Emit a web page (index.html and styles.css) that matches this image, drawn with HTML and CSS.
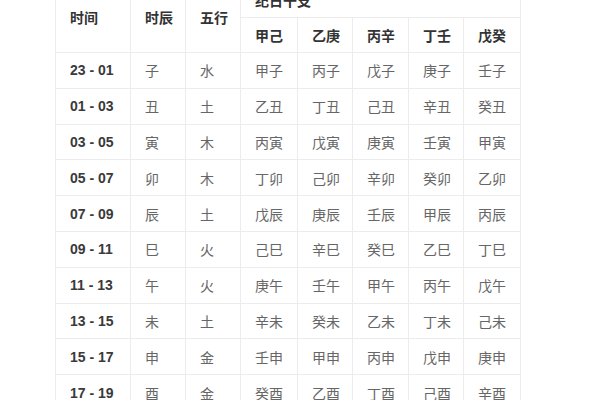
FILE: index.html
```html
<!DOCTYPE html>
<html lang="zh">
<head>
<meta charset="utf-8">
<title>时辰表</title>
<link rel="stylesheet" href="styles.css">
</head>
<body>
<table class="tbl">
  <colgroup>
    <col class="c-time"><col class="c-n"><col class="c-n"><col class="c-w"><col class="c-n"><col class="c-m"><col class="c-n"><col class="c-w">
  </colgroup>
  <thead>
    <tr class="h1">
      <th rowspan="2">时间</th>
      <th rowspan="2">时辰</th>
      <th rowspan="2">五行</th>
      <th colspan="5">纪日干支</th>
    </tr>
    <tr class="h2">
      <th>甲己</th><th>乙庚</th><th>丙辛</th><th>丁壬</th><th>戊癸</th>
    </tr>
  </thead>
  <tbody>
    <tr><td class="t">23 - 01</td><td>子</td><td>水</td><td>甲子</td><td>丙子</td><td>戊子</td><td>庚子</td><td>壬子</td></tr>
    <tr><td class="t">01 - 03</td><td>丑</td><td>土</td><td>乙丑</td><td>丁丑</td><td>己丑</td><td>辛丑</td><td>癸丑</td></tr>
    <tr><td class="t">03 - 05</td><td>寅</td><td>木</td><td>丙寅</td><td>戊寅</td><td>庚寅</td><td>壬寅</td><td>甲寅</td></tr>
    <tr><td class="t">05 - 07</td><td>卯</td><td>木</td><td>丁卯</td><td>己卯</td><td>辛卯</td><td>癸卯</td><td>乙卯</td></tr>
    <tr><td class="t">07 - 09</td><td>辰</td><td>土</td><td>戊辰</td><td>庚辰</td><td>壬辰</td><td>甲辰</td><td>丙辰</td></tr>
    <tr><td class="t">09 - 11</td><td>巳</td><td>火</td><td>己巳</td><td>辛巳</td><td>癸巳</td><td>乙巳</td><td>丁巳</td></tr>
    <tr><td class="t">11 - 13</td><td>午</td><td>火</td><td>庚午</td><td>壬午</td><td>甲午</td><td>丙午</td><td>戊午</td></tr>
    <tr><td class="t">13 - 15</td><td>未</td><td>土</td><td>辛未</td><td>癸未</td><td>乙未</td><td>丁未</td><td>己未</td></tr>
    <tr><td class="t">15 - 17</td><td>申</td><td>金</td><td>壬申</td><td>甲申</td><td>丙申</td><td>戊申</td><td>庚申</td></tr>
    <tr><td class="t">17 - 19</td><td>酉</td><td>金</td><td>癸酉</td><td>乙酉</td><td>丁酉</td><td>己酉</td><td>辛酉</td></tr>
    <tr><td class="t">19 - 21</td><td>戌</td><td>土</td><td>甲戌</td><td>丙戌</td><td>戊戌</td><td>庚戌</td><td>壬戌</td></tr>
  </tbody>
</table>
</body>
</html>
```
FILE: styles.css
```css
html, body {
  margin: 0;
  padding: 0;
  background: #ffffff;
  overflow: hidden;
}

.tbl {
  margin: -19px 0 0 55px;
  border-collapse: collapse;
  table-layout: fixed;
  width: 466px;
  font-family: "Liberation Sans", "Noto Sans CJK SC", sans-serif;
  font-size: 14px;
}

.c-time { width: 75px; }
.c-n { width: 55px; }
.c-w { width: 57px; }
.c-m { width: 56px; }

.tbl th,
.tbl td {
  border: 1px solid #ececec;
  padding: 0 0 0 14px;
  text-align: left;
  vertical-align: middle;
  white-space: nowrap;
}

.tbl th {
  font-family: "Noto Sans CJK SC", sans-serif;
  font-weight: 700;
  color: #333333;
}

.h1 { height: 36px; }
.h2 { height: 35px; }

.tbl td {
  font-family: "Noto Sans CJK SC", sans-serif;
  color: #666666;
  height: 35.8px;
  box-sizing: border-box;
}

.tbl td.t {
  font-family: "Liberation Sans", sans-serif;
  font-weight: 700;
  color: #3a3a3a;
}
```
